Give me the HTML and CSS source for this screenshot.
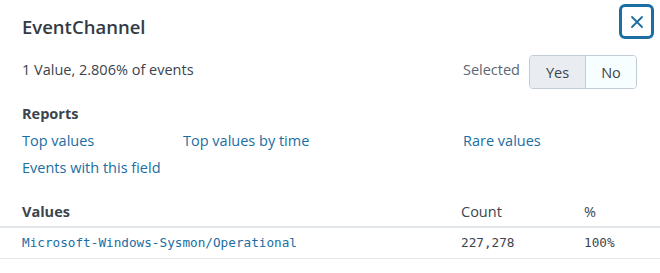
FILE: index.html
```html
<!DOCTYPE html>
<html lang="en">
<head>
  <meta charset="UTF-8">
  <meta name="viewport" content="width=device-width, initial-scale=1.0">
  <title>EventChannel</title>
  <link rel="stylesheet" href="styles.css">
</head>
<body>
  <div class="panel">
    <div class="header">
      <h1>EventChannel</h1>
      <button class="close" aria-label="Close">
        <svg width="14" height="14" viewBox="0 0 14 14">
          <path d="M2 2 L12 12 M12 2 L2 12" stroke="#1a6ea3" stroke-width="1.8" stroke-linecap="round"/>
        </svg>
      </button>
    </div>

    <div class="summary">
      <span class="count-text">1 Value, 2.806% of events</span>
      <div class="selected">
        <span class="selected-label">Selected</span>
        <div class="toggle">
          <button class="toggle-btn active">Yes</button>
          <button class="toggle-btn">No</button>
        </div>
      </div>
    </div>

    <div class="reports">
      <h2>Reports</h2>
      <div class="report-links">
        <a href="#">Top values</a>
        <a href="#">Top values by time</a>
        <a href="#">Rare values</a>
        <a href="#">Events with this field</a>
      </div>
    </div>

    <table class="values">
      <thead>
        <tr>
          <th class="col-value">Values</th>
          <th class="col-count">Count</th>
          <th class="col-pct">%</th>
        </tr>
      </thead>
      <tbody>
        <tr>
          <td class="col-value"><a href="#">Microsoft-Windows-Sysmon/Operational</a></td>
          <td class="col-count">227,278</td>
          <td class="col-pct">100%</td>
        </tr>
      </tbody>
    </table>
  </div>
</body>
</html>
```

FILE: styles.css
```css
body {
  margin: 0;
  font-family: "Open Sans", sans-serif;
  color: #3c444d;
  background: #fff;
}
.panel {
  width: 660px;
}
.header {
  display: flex;
  justify-content: space-between;
  align-items: flex-start;
  padding: 4px 6px 0 22px;
}
h1 {
  margin: 11px 0 0;
  font-size: 18.5px;
  font-weight: 600;
  line-height: 24px;
  color: #333b44;
}
.close {
  width: 35px;
  height: 35px;
  padding: 0;
  display: flex;
  align-items: center;
  justify-content: center;
  border: 3px solid #1a6ea3;
  border-radius: 6px;
  background: #fff;
}
.summary {
  display: flex;
  justify-content: space-between;
  align-items: center;
  padding: 16px 23px 0 22px;
}
.count-text {
  font-size: 14.5px;
  margin-top: -6px;
}
.selected {
  display: flex;
  align-items: center;
  gap: 9px;
}
.selected-label {
  font-size: 14.5px;
  color: #5c6773;
  margin-top: -6px;
}
.toggle {
  display: flex;
  border: 1px solid #c3cbd4;
  border-radius: 4px;
  overflow: hidden;
}
.toggle-btn {
  height: 32px;
  border: none;
  font-family: "Open Sans", sans-serif;
  font-size: 14.5px;
  color: #3c444d;
  background: #f7feff;
  padding: 0;
  width: 50px;
}
.toggle-btn.active {
  width: 56px;
  background: #e9ecf0;
  border-right: 1px solid #c3cbd4;
}
.reports {
  padding: 15px 22px 0;
}
h2 {
  margin: 0;
  font-size: 14.5px;
  font-weight: 700;
  line-height: 20px;
}
.report-links {
  display: grid;
  grid-template-columns: 161px 280px auto;
  row-gap: 7px;
  margin-top: 7px;
}
a {
  color: #1a6ea3;
  text-decoration: none;
  font-size: 14.5px;
  line-height: 20px;
}
.values {
  width: 100%;
  border-collapse: collapse;
  margin-top: 19px;
  font-size: 14.5px;
}
.values th {
  text-align: left;
  font-weight: 400;
  padding: 5px 0 4px;
  line-height: 20px;
  border-bottom: 2px solid #e1e6eb;
}
.values th.col-value {
  font-weight: 700;
}
.values td {
  padding: 7px 0 7px;
  line-height: 16px;
  border-bottom: 1px solid #e1e6eb;
  font-family: "DejaVu Sans Mono", monospace;
  font-size: 12.7px;
}
.values td a {
  font-size: 12.7px;
  line-height: 16px;
}
.col-value {
  padding-left: 22px !important;
}
.col-count {
  width: 123px;
}
.col-pct {
  width: 76px;
}
```
